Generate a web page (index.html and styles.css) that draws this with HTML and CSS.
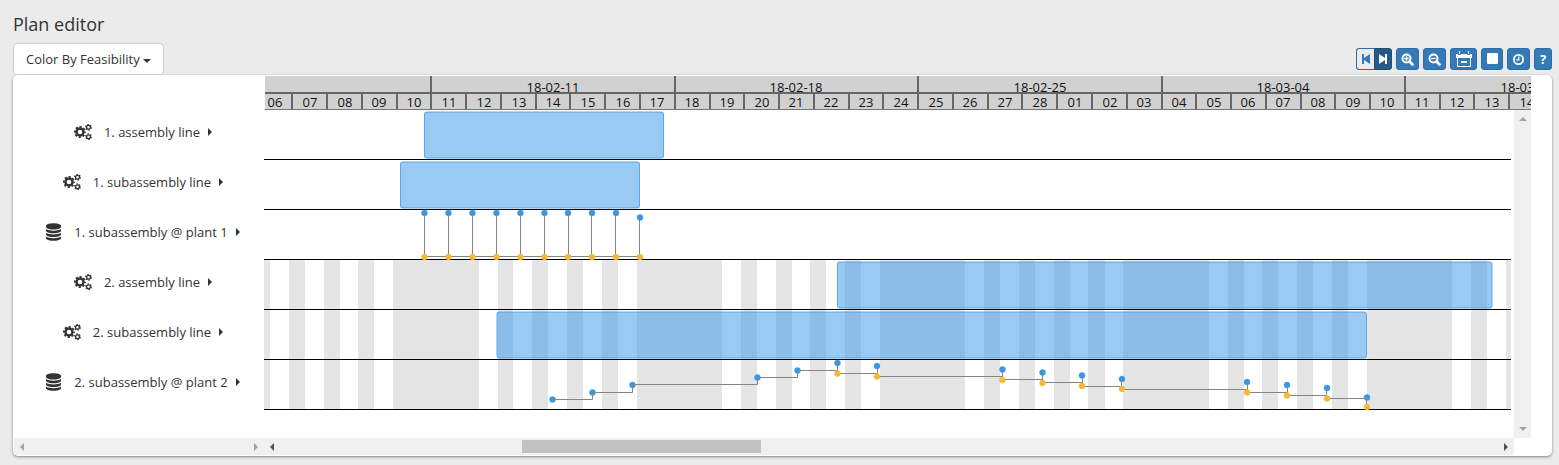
FILE: index.html
```html
<!DOCTYPE html>
<html lang="en">
<head>
<meta charset="utf-8">
<title>Plan editor</title>
<link rel="stylesheet" href="styles.css">
</head>
<body>
<svg class="defs" aria-hidden="true">
  <symbol id="cogs" viewBox="0 0 18 16">
    <g fill="none" stroke="currentColor">
      <circle cx="6" cy="8" r="3.500" stroke-width="2.400"/>
      <circle cx="6" cy="8" r="5.100" stroke-width="1.800" stroke-dasharray="2.200 1.805" stroke-dashoffset="1.100"/>
      <circle cx="14.500" cy="3.300" r="1.900" stroke-width="1.300"/>
      <circle cx="14.500" cy="3.300" r="2.800" stroke-width="1.200" stroke-dasharray="1.500 1.432"/>
      <circle cx="14.500" cy="12.700" r="1.900" stroke-width="1.300"/>
      <circle cx="14.500" cy="12.700" r="2.800" stroke-width="1.200" stroke-dasharray="1.500 1.432"/>
    </g>
  </symbol>
  <symbol id="database" viewBox="128 0 1536 1792">
    <path fill="currentColor" d="M896 768q237 0 443-43t325-127v170q0 69-103 128t-280 93.500-385 34.500-385-34.500-280-93.500-103-128v-170q119 84 325 127t443 43zm0 768q237 0 443-43t325-127v170q0 69-103 128t-280 93.500-385 34.500-385-34.500-280-93.500-103-128v-170q119 84 325 127t443 43zm0-384q237 0 443-43t325-127v170q0 69-103 128t-280 93.500-385 34.500-385-34.500-280-93.500-103-128v-170q119 84 325 127t443 43zm0-1152q208 0 385 34.500t280 93.500 103 128v128q0 69-103 128t-280 93.500-385 34.500-385-34.500-280-93.500-103-128v-128q0-69 103-128t280-93.500 385-34.500z"/>
  </symbol>
  <symbol id="stripes" viewBox="264 0 1400 150">
    <path d="M264 0h6v150h-6zM289 0h16v150h-16zM324 0h16v150h-16zM358 0h16v150h-16zM393 0h86v150h-86zM498 0h15v150h-15zM532 0h16v150h-16zM567 0h16v150h-16zM602 0h16v150h-16zM637 0h85v150h-85zM741 0h16v150h-16zM776 0h16v150h-16zM810 0h16v150h-16zM845 0h16v150h-16zM880 0h85v150h-85zM984 0h16v150h-16zM1019 0h16v150h-16zM1054 0h16v150h-16zM1088 0h17v150h-17zM1123 0h86v150h-86zM1228 0h16v150h-16zM1262 0h16v150h-16zM1297 0h16v150h-16zM1332 0h16v150h-16zM1367 0h85v150h-85zM1471 0h16v150h-16zM1506 0h16v150h-16z"/>
  </symbol>
</svg>

<main class="page">
  <h1 class="title">Plan editor</h1>

  <div class="toolbar">
    <div class="dropdown">
      <select class="dropdown-select" aria-label="Color by">
        <option>Color By Feasibility</option>
      </select>
      <span class="dropdown-caret"></span>
    </div>
    <div class="tools">
      <div class="group">
        <button class="btn btn-off" type="button" aria-label="Backward"><svg width="10" height="12" viewBox="0 0 10 12"><path d="M1 1h2v4l6-4v10l-6-4v4h-2z"/></svg></button><button class="btn btn-on" type="button" aria-label="Forward"><svg width="10" height="12" viewBox="0 0 10 12"><path d="M9 1h-2v4l-6-4v10l6-4v4h2z"/></svg></button>
      </div>
      <button class="btn" type="button" aria-label="Zoom in"><svg width="13" height="13" viewBox="0 0 13 13"><g fill="none" stroke="currentColor" stroke-width="2"><circle cx="5.500" cy="5.500" r="4"/><path d="M8.500 8.500l3 3" stroke-width="2.600" stroke-linecap="round"/><path d="M3.300 5.500h4.400M5.500 3.300v4.400" stroke-width="1.400"/></g></svg></button>
      <button class="btn" type="button" aria-label="Zoom out"><svg width="13" height="13" viewBox="0 0 13 13"><g fill="none" stroke="currentColor" stroke-width="2"><circle cx="5.500" cy="5.500" r="4"/><path d="M8.500 8.500l3 3" stroke-width="2.600" stroke-linecap="round"/><path d="M3.300 5.500h4.400" stroke-width="1.400"/></g></svg></button>
      <button class="btn btn-calendar" type="button" aria-label="Calendar"><svg width="16" height="16" viewBox="0 0 16 16"><path d="M0 3h2v1h3v-1h6v1h3v-1h2v4h-16z"/><path d="M3 0h1v3h-1zM12 0h1v3h-1z"/><path d="M1.500 6v9.500h13v-9.500" fill="none" stroke="currentColor"/><path d="M5 10h6v2h-6z"/></svg></button>
      <button class="btn btn-stop" type="button" aria-label="Stop"><svg width="12" height="12" viewBox="0 0 12 12"><rect x="1" y="0" width="11" height="11" rx="1"/></svg></button>
      <button class="btn" type="button" aria-label="Time"><svg width="13" height="13" viewBox="0 0 13 13"><circle cx="6.500" cy="6.500" r="4.600" fill="none" stroke="currentColor" stroke-width="1.800"/><path d="M6.800 3.500v3.300h-2.600" fill="none" stroke="currentColor" stroke-width="1.200"/></svg></button>
      <button class="btn btn-help" type="button" aria-label="Help">?</button>
    </div>
  </div>

  <section class="panel">
    <div class="names">
      <ul class="name-list">
        <li class="name"><svg class="cogs"><use href="#cogs"/></svg><span>1. assembly line</span><i class="more"></i></li>
        <li class="name"><svg class="cogs"><use href="#cogs"/></svg><span>1. subassembly line</span><i class="more"></i></li>
        <li class="name"><svg class="database"><use href="#database"/></svg><span>1. subassembly @ plant 1</span><i class="more"></i></li>
        <li class="name"><svg class="cogs"><use href="#cogs"/></svg><span>2. assembly line</span><i class="more"></i></li>
        <li class="name"><svg class="cogs"><use href="#cogs"/></svg><span>2. subassembly line</span><i class="more"></i></li>
        <li class="name"><svg class="database"><use href="#database"/></svg><span>2. subassembly @ plant 2</span><i class="more"></i></li>
      </ul>
      <div class="hscroll hscroll-idle"><i class="arrow-left"></i><i class="arrow-right"></i></div>
    </div>

    <div class="plan">
      <svg class="timeline" role="img" aria-label="Time axis">
        <g transform="translate(-265 -76)">
          <path class="tick" d="M265 93h1400M431 76v17M675 76v17M918 76v17M1162 76v17M1405 76v17"/>
          <path class="tick" d="M292 93v17M327 93v17M362 93v17M397 93v17M431 93v17M466 93v17M501 93v17M536 93v17M570 93v17M605 93v17M640 93v17M675 93v17M710 93v17M744 93v17M779 93v17M814 93v17M849 93v17M883 93v17M918 93v17M953 93v17M988 93v17M1022 93v17M1057 93v17M1092 93v17M1127 93v17M1162 93v17M1196 93v17M1231 93v17M1266 93v17M1301 93v17M1335 93v17M1370 93v17M1405 93v17M1440 93v17M1474 93v17M1509 93v17"/>
          <g class="date">
            <text x="553" y="92">18-02-11</text><text x="796" y="92">18-02-18</text><text x="1040" y="92">18-02-25</text><text x="1283" y="92">18-03-04</text><text x="1527" y="92">18-03-11</text>
            <text x="275" y="107">06</text><text x="310" y="107">07</text><text x="345" y="107">08</text><text x="379" y="107">09</text><text x="414" y="107">10</text><text x="449" y="107">11</text><text x="484" y="107">12</text><text x="519" y="107">13</text><text x="553" y="107">14</text><text x="588" y="107">15</text><text x="623" y="107">16</text><text x="657" y="107">17</text><text x="692" y="107">18</text><text x="727" y="107">19</text><text x="762" y="107">20</text><text x="796" y="107">21</text><text x="831" y="107">22</text><text x="866" y="107">23</text><text x="901" y="107">24</text><text x="936" y="107">25</text><text x="970" y="107">26</text><text x="1005" y="107">27</text><text x="1040" y="107">28</text><text x="1075" y="107">01</text><text x="1110" y="107">02</text><text x="1144" y="107">03</text><text x="1179" y="107">04</text><text x="1214" y="107">05</text><text x="1248" y="107">06</text><text x="1283" y="107">07</text><text x="1318" y="107">08</text><text x="1353" y="107">09</text><text x="1387" y="107">10</text><text x="1422" y="107">11</text><text x="1457" y="107">12</text><text x="1492" y="107">13</text><text x="1527" y="107">14</text>
          </g>
        </g>
      </svg>

      <div class="view">
        <svg class="chart" role="img" aria-label="Plan chart">
          <g transform="translate(-264 -110)">
            <use class="closed" href="#stripes" x="264" y="260" width="1400" height="150"/>
            <path class="rule" d="M264 159h1400v1h-1400zM264 209h1400v1h-1400zM264 259h1400v1h-1400zM264 309h1400v1h-1400zM264 359h1400v1h-1400zM264 409h1400v1h-1400z"/>
            <g class="bar">
              <rect x="424.500" y="112" width="239" height="46" rx="2"/>
              <rect x="400.500" y="162" width="239" height="46" rx="2"/>
              <rect x="837.500" y="262" width="654.500" height="46" rx="2"/>
              <rect x="497" y="312" width="869.500" height="46" rx="2"/>
            </g>
            <g class="high">
              <circle cx="424.500" cy="213" r="3"/><circle cx="448.500" cy="213" r="3"/><circle cx="472.500" cy="213" r="3"/><circle cx="496.500" cy="213" r="3"/><circle cx="520.500" cy="213" r="3"/><circle cx="544.500" cy="213" r="3"/><circle cx="568" cy="213" r="3"/><circle cx="592" cy="213" r="3"/><circle cx="616" cy="213" r="3"/><circle cx="640" cy="217.500" r="3"/>
              <circle cx="552.500" cy="399.500" r="3"/><circle cx="592.500" cy="392.500" r="3"/><circle cx="632.500" cy="385" r="3"/><circle cx="757.500" cy="377.500" r="3"/><circle cx="797.500" cy="370.500" r="3"/><circle cx="837.500" cy="363" r="3"/><circle cx="877" cy="366" r="3"/><circle cx="1002.500" cy="369.500" r="3"/><circle cx="1042.500" cy="372.500" r="3"/><circle cx="1082" cy="375.500" r="3"/><circle cx="1122" cy="379" r="3"/><circle cx="1247" cy="382" r="3"/><circle cx="1287" cy="385" r="3"/><circle cx="1327" cy="388" r="3"/><circle cx="1367" cy="397.500" r="3"/>
            </g>
            <g class="stock" transform="translate(.5 .5)">
              <path d="M424 213v43h24v-43v43h24v-43v43h24v-43v43h24v-43v43h24v-43v43h24v-43v43h23v-43v43h24v-43v43h24v-38"/>
              <path d="M552 399H592V392H632V384H757V377H797V370H837V363V373H877V366V376H1002V369V379H1042V372V382H1082V376V386H1121V379V389H1247V382V392H1287V385V395H1326V388V398H1366V397V406"/>
            </g>
            <g class="low">
              <circle cx="424.500" cy="257" r="3"/><circle cx="448.500" cy="257" r="3"/><circle cx="472.500" cy="257" r="3"/><circle cx="496.500" cy="257" r="3"/><circle cx="520.500" cy="257" r="3"/><circle cx="544.500" cy="257" r="3"/><circle cx="568" cy="257" r="3"/><circle cx="592" cy="257" r="3"/><circle cx="616" cy="257" r="3"/><circle cx="640" cy="257" r="3"/>
              <circle cx="837.500" cy="373.500" r="3"/><circle cx="877" cy="376.500" r="3"/><circle cx="1002.500" cy="380" r="3"/><circle cx="1042.500" cy="383" r="3"/><circle cx="1082" cy="386" r="3"/><circle cx="1122" cy="389" r="3"/><circle cx="1247" cy="392.500" r="3"/><circle cx="1287" cy="395.500" r="3"/><circle cx="1327" cy="398.500" r="3"/><circle cx="1367" cy="407" r="3"/>
            </g>
          </g>
        </svg>
        <div class="vscroll"><i class="arrow-up"></i><i class="arrow-down"></i></div>
      </div>
      <div class="hscroll"><i class="arrow-left"></i><div class="track"><div class="thumb"></div></div><i class="arrow-right"></i></div>
    </div>
  </section>
</main>
</body>
</html>
```

FILE: styles.css
```css
* { box-sizing: border-box; }
body {
  margin: 0;
  background: #ebebeb;
  color: #333;
  font: 13px/20px "Open Sans", "Noto Sans", sans-serif;
}
.defs { position: absolute; width: 0; height: 0; }
.page { padding: 12px 7px 8px 13px; }
.title { margin: 0 0 6px; font-size: 18px; line-height: 25px; font-weight: 400; }

.toolbar { display: flex; justify-content: space-between; align-items: center; }
.dropdown { display: grid; align-items: center; }
.dropdown > * { grid-area: 1 / 1; }
.dropdown-select {
  appearance: none;
  width: 151px;
  height: 32px;
  padding: 0 12px;
  border: 1px solid #ccc;
  border-radius: 4px;
  background: #fff;
  color: #333;
  font: inherit;
}
.dropdown-caret {
  justify-self: end;
  margin: 3px 13px 0 0;
  border: 4px solid transparent;
  border-top-color: #333;
  border-bottom: 0;
  pointer-events: none;
}
.tools { display: flex; gap: 4px; }
.group { display: flex; }
.btn {
  display: flex;
  align-items: center;
  justify-content: center;
  width: 23px;
  height: 22px;
  padding: 0;
  border: 1px solid #2e6da4;
  border-radius: 3px;
  background: #337ab7;
  color: #fff;
  font: bold 13px/20px "Open Sans", sans-serif;
}
.btn svg { fill: currentColor; }
.btn-off { width: 18px; border-right: 0; border-radius: 3px 0 0 3px; background: #ebebeb; color: #337ab7; }
.btn-on { width: 18px; border-color: #204d74; border-radius: 0 3px 3px 0; background: #265a88; }
.btn-calendar { width: 27px; }
.btn-stop { width: 22px; }
.btn-help { width: 18px; }

.panel {
  display: flex;
  padding: 1px 21px 1px 1px;
  border-radius: 5px;
  background: #fff;
  box-shadow: 0 1px 3px rgba(0, 0, 0, .45);
}
.names { flex: none; display: flex; flex-direction: column; width: 250px; }
.name-list { flex: 1; margin: 0; padding: 32px 0 0 8px; list-style: none; }
.name { display: flex; align-items: center; justify-content: center; height: 50px; padding-bottom: 3px; }
.cogs { width: 18px; height: 16px; margin-right: 12px; }
.database { width: 15px; height: 18px; margin-right: 13px; }
.more {
  margin-left: 8px;
  border: 4px solid transparent;
  border-left-color: #333;
  border-right: 0;
}

.plan { flex: 1; min-width: 0; }
.timeline { display: block; width: 100%; height: 34px; border-left: 1px solid #fff; border-bottom: 1px solid #777; background: #d1d1d1; }
.tick { fill: none; stroke: #666; stroke-width: 2; }
.date { fill: #111; text-anchor: middle; }
.view { display: flex; height: 328px; }
.chart { flex: 1; min-width: 0; height: 300px; margin-right: 3px; }
.closed { fill: #e5e5e5; }
.rule { fill: #000; }
.bar { fill: #3296e8; fill-opacity: .5; stroke: #3c9aec; stroke-opacity: .8; }
.high { fill: #3498e8; stroke: #3498e8; stroke-opacity: .4; }
.low { fill: #f5b935; stroke: #f5b935; stroke-opacity: .4; }
.stock { fill: none; stroke: #848484; }

.vscroll { display: flex; flex-direction: column; justify-content: space-between; align-items: center; width: 17px; padding: 7px 0; background: #f0f0f0; }
.hscroll { display: flex; justify-content: space-between; align-items: center; height: 17px; margin-right: 17px; padding: 0 6px; background: #f0f0f0; }
.hscroll-idle { margin-right: 0; }
.track { flex: 1; padding: 0 60% 0 20%; }
.thumb { height: 13px; background: #c1c1c1; }
.arrow-left, .arrow-right, .arrow-up, .arrow-down { border: 4px solid transparent; }
.arrow-left { border-left: 0; border-right-color: #505050; }
.arrow-right { border-right: 0; border-left-color: #505050; }
.arrow-up { border-top: 0; border-bottom-color: #a3a3a3; }
.arrow-down { border-bottom: 0; border-top-color: #a3a3a3; }
.hscroll-idle .arrow-left { border-right-color: #a3a3a3; }
.hscroll-idle .arrow-right { border-left-color: #a3a3a3; }
```
